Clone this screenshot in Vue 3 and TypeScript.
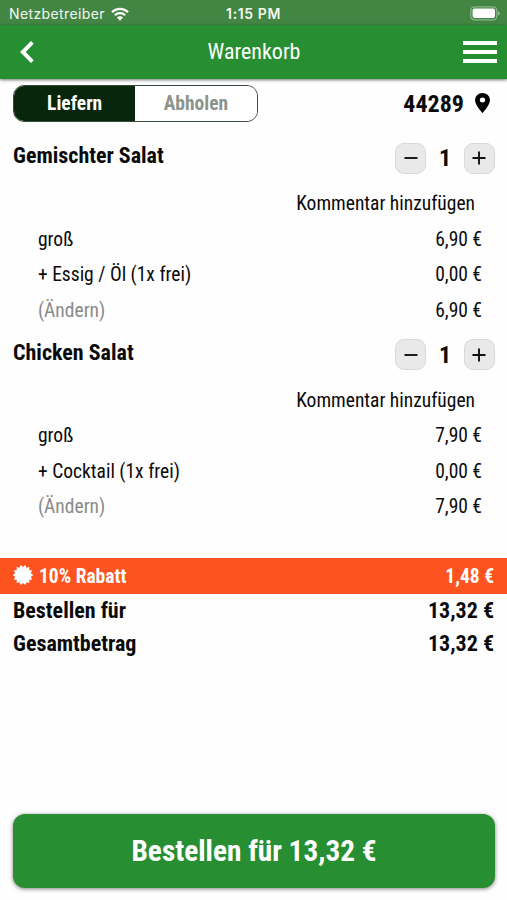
<script setup lang="ts">
import { ref } from 'vue'

interface Line {
  label: string
  price: string
  muted?: boolean
}
interface CartItem {
  name: string
  count: number
  lines: Line[]
}

const mode = ref<'deliver' | 'pickup'>('deliver')

const items = ref<CartItem[]>([
  {
    name: 'Gemischter Salat',
    count: 1,
    lines: [
      { label: 'groß', price: '6,90 €' },
      { label: '+ Essig / Öl (1x frei)', price: '0,00 €' },
      { label: '(Ändern)', price: '6,90 €', muted: true },
    ],
  },
  {
    name: 'Chicken Salat',
    count: 1,
    lines: [
      { label: 'groß', price: '7,90 €' },
      { label: '+ Cocktail (1x frei)', price: '0,00 €' },
      { label: '(Ändern)', price: '7,90 €', muted: true },
    ],
  },
])

const total = '13,32 €'

// Toothed seal around the centre of a 20x20 box
const teeth = 14
const seal = Array.from({ length: teeth * 2 }, (_, i) => {
  const r = i % 2 === 0 ? 10.2 : 8
  const a = ((i + 1) * Math.PI) / teeth
  return `${(10 + r * Math.sin(a)).toFixed(2)},${(10 - r * Math.cos(a)).toFixed(2)}`
}).join(' ')
</script>

<template>
  <div class="screen">
    <div class="status">
      <div class="carrier">
        <span>Netzbetreiber</span>
        <svg class="wifi" viewBox="0 0 18 14" width="18" height="14">
          <path d="M1 5.2a11.4 11.4 0 0 1 16 0M3.8 8.2a7.4 7.4 0 0 1 10.4 0" fill="none" stroke="#fff" stroke-width="2.3" />
          <path d="M9 13.8 5.9 10.6a4.4 4.4 0 0 1 6.2 0z" fill="#fff" />
        </svg>
      </div>
      <span class="clock">1:15 PM</span>
      <svg class="battery" viewBox="0 0 30 15" width="30" height="15">
        <rect x=".8" y=".8" width="26" height="13" rx="3.6" fill="none" stroke="#fff" stroke-opacity=".4" stroke-width="1.2" />
        <rect x="2.6" y="2.6" width="22.4" height="9.4" rx="2" fill="#fff" />
        <path d="M28 5.2v4.2q1.6-.7 1.6-2.1T28 5.2z" fill="#fff" fill-opacity=".5" />
      </svg>
    </div>

    <header class="bar">
      <svg class="back" viewBox="0 0 14 22" width="14" height="22">
        <path d="M12.4 1.4 2.8 11l9.6 9.6" fill="none" stroke="#fff" stroke-width="3.9" />
      </svg>
      <h1 class="title">Warenkorb</h1>
      <div class="menu"><i></i><i></i><i></i></div>
    </header>

    <main>
      <div class="top">
        <div class="toggle">
          <button :class="{ on: mode === 'deliver' }" @click="mode = 'deliver'">Liefern</button>
          <button :class="{ on: mode === 'pickup' }" @click="mode = 'pickup'">Abholen</button>
        </div>
        <div class="place">
          <span>44289</span>
          <svg viewBox="0 0 14 20" width="15" height="20" preserveAspectRatio="none">
            <path fill-rule="evenodd" d="M7 0a7 7 0 0 0-7 7c0 5.2 7 13 7 13s7-7.8 7-13a7 7 0 0 0-7-7zm0 9.5a2.5 2.5 0 1 1 0-5 2.5 2.5 0 0 1 0 5z" />
          </svg>
        </div>
      </div>

      <section v-for="item in items" :key="item.name" class="item">
        <div class="head">
          <h2>{{ item.name }}</h2>
          <div class="qty">
            <button @click="item.count--">
              <svg viewBox="0 0 14 14" width="14" height="14"><path d="M.5 7h13" stroke="#111" stroke-width="1.9" /></svg>
            </button>
            <span>{{ item.count }}</span>
            <button @click="item.count++">
              <svg viewBox="0 0 14 14" width="14" height="14"><path d="M.5 7h13M7 .5v13" stroke="#111" stroke-width="1.9" /></svg>
            </button>
          </div>
        </div>
        <div class="comment">Kommentar hinzufügen</div>
        <div v-for="line in item.lines" :key="line.label" class="line">
          <span :class="{ muted: line.muted }">{{ line.label }}</span>
          <span>{{ line.price }}</span>
        </div>
      </section>

      <div class="discount">
        <div class="rebate">
          <svg viewBox="0 0 20 20" width="20" height="20"><polygon :points="seal" fill="#fff" /></svg>
          <span>10% Rabatt</span>
        </div>
        <span>1,48 €</span>
      </div>
      <div class="sum"><span>Bestellen für</span><span>{{ total }}</span></div>
      <div class="sum"><span>Gesamtbetrag</span><span>{{ total }}</span></div>
    </main>

    <button class="order">Bestellen für {{ total }}</button>
  </div>
</template>

<style>
body {
  background: #fff;
}
</style>

<style scoped>
.screen {
  display: flex;
  flex-direction: column;
  box-sizing: border-box;
  height: 900px;
  padding-bottom: 12px;
  overflow: hidden;
  background: #fefefe;
  color: #0a0a0a;
  font-family: 'Roboto Condensed', Roboto, sans-serif;
  font-stretch: 75%;
  font-size: 19.5px;
  line-height: 1;
  white-space: nowrap;
}
button {
  margin: 0;
  padding: 0;
  border: 0;
  font: inherit;
  font-stretch: 75%;
  color: inherit;
}
h1,
h2 {
  margin: 0;
}
.status {
  display: grid;
  grid-template-columns: 1fr auto 1fr;
  align-items: center;
  height: 25px;
  padding: 2px 7px 0 9px;
  box-sizing: border-box;
  background: #438543;
  color: #f4f8f2;
  font-family: Inter, sans-serif;
  font-stretch: 100%;
  font-size: 14px;
}
.carrier {
  display: flex;
  align-items: center;
  gap: 6px;
  letter-spacing: 0.38px;
}
.clock {
  margin-right: 2px;
  font-weight: 600;
  letter-spacing: 0.6px;
}
.battery {
  justify-self: end;
  margin-top: -1px;
}
.bar {
  display: grid;
  grid-template-columns: 1fr auto 1fr;
  align-items: center;
  flex: none;
  height: 54px;
  padding: 0 10px 0 20px;
  background: #278f31;
  box-shadow: 0 1px 3px rgba(0, 0, 0, 0.55);
  color: #fff;
}
.title {
  margin-right: 9px;
  font-size: 22px;
  font-weight: 400;
}
.menu {
  display: flex;
  flex-direction: column;
  justify-self: end;
  gap: 5px;
  width: 34px;
}
.menu i {
  height: 4px;
  background: #fff;
}
.top {
  display: flex;
  justify-content: space-between;
  align-items: center;
  height: 37px;
  padding: 6px 17px 0 13px;
}
.toggle {
  display: flex;
  box-sizing: border-box;
  width: 244.5px;
  height: 37px;
  border: 1px solid #3a4a3c;
  border-radius: 11px;
  overflow: hidden;
  font-size: 19.5px;
  font-weight: 700;
}
.toggle button {
  flex: 1;
  background: #fff;
  color: #8c948c;
}
.toggle .on {
  background: #08260c;
  color: #fff;
}
.place {
  display: flex;
  align-items: center;
  gap: 11px;
  font-size: 24px;
  font-weight: 700;
}
.place svg {
  margin-top: -2px;
}
main {
  flex: 1;
}
.item {
  height: 196.7px;
}
.top + .item {
  margin-top: 8.8px;
}
.head {
  display: flex;
  justify-content: space-between;
  align-items: center;
  height: 54.7px;
  padding: 0 12px 0 13px;
}
h2 {
  padding-bottom: 3.6px;
  font-size: 22px;
  font-weight: 700;
}
.qty {
  display: flex;
  align-items: center;
  justify-content: space-between;
  width: 100px;
  font-size: 24px;
  font-weight: 700;
}
.qty button {
  display: flex;
  align-items: center;
  justify-content: center;
  box-sizing: border-box;
  width: 31px;
  height: 31px;
  border: 1px solid #d9d9d9;
  border-radius: 9px;
  background: #e9e9e9;
}
.comment,
.line {
  display: flex;
  justify-content: space-between;
  align-items: center;
  box-sizing: border-box;
  height: 35.5px;
  padding: 1.4px 25px 0 38px;
}
.comment {
  justify-content: flex-end;
  padding-right: 32px;
}
.muted {
  color: #8a8a8a;
}
.discount {
  display: flex;
  justify-content: space-between;
  align-items: center;
  box-sizing: border-box;
  height: 36px;
  margin-top: 33.7px;
  padding: 1.6px 13px 0 13px;
  background: #fd531e;
  color: #fff;
  font-weight: 700;
}
.rebate {
  display: flex;
  align-items: center;
  gap: 6px;
}
.rebate svg {
  margin-top: -3px;
}
.sum {
  display: flex;
  justify-content: space-between;
  align-items: center;
  box-sizing: border-box;
  height: 33px;
  padding: 1.8px 13px 0 13px;
  font-size: 22px;
  font-weight: 700;
}
.order {
  flex: none;
  height: 74px;
  margin: 0 12px 0 13px;
  padding-top: 2px;
  border-radius: 12px;
  background: #278f31;
  box-shadow: 0 1px 4px rgba(0, 0, 0, 0.5);
  color: #fff;
  font-size: 29.3px;
  font-weight: 700;
}
</style>
